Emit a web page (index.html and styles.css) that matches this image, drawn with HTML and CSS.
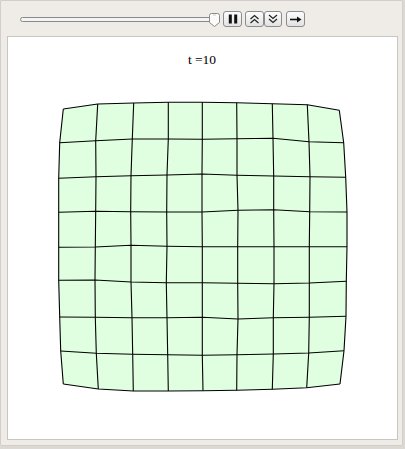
FILE: index.html
```html
<!DOCTYPE html>
<html>
<head>
<meta charset="utf-8">
<link rel="stylesheet" href="styles.css">
</head>
<body>
<div class="panel">
  <div class="controls">
    <svg class="slider" width="200" height="16" viewBox="0 0 200 16">
      <rect x="0.5" y="5.5" width="194" height="4" rx="2" fill="#f4f4f4" stroke="#8a8a8a"/>
      <path d="M189.5 3.5 Q189.5 1.5 191.5 1.5 L197.5 1.5 Q199.5 1.5 199.5 3.5 L199.5 10.5 L194.5 14.5 L189.5 10.5 Z" fill="#fbfbfb" stroke="#8a8a8a"/>
      <path d="M193 3 L196 3" stroke="#cfcfcf"/>
    </svg>
    <div class="btn btn-pause">
      <svg width="16" height="14" viewBox="0 0 16 14"><rect x="3.8" y="2.5" width="3" height="9" fill="#111"/><rect x="9.2" y="2.5" width="3" height="9" fill="#111"/></svg>
    </div>
    <div class="btn btn-up">
      <svg width="17" height="14" viewBox="0 0 17 14"><path d="M4.5 7 L8.5 3.5 L12.5 7 M4.5 11 L8.5 7.5 L12.5 11" fill="none" stroke="#222" stroke-width="1.2"/></svg>
    </div>
    <div class="btn btn-down">
      <svg width="16" height="14" viewBox="0 0 16 14"><path d="M4 3 L8 6.5 L12 3 M4 7 L8 10.5 L12 7" fill="none" stroke="#222" stroke-width="1.2"/></svg>
    </div>
    <div class="btn btn-arrow">
      <svg width="17" height="14" viewBox="0 0 17 14"><path d="M3 7.5 L11 7.5" stroke="#111" stroke-width="1.6"/><path d="M10 4.5 L14.5 7.5 L10 10.5 Z" fill="#111"/></svg>
    </div>
  </div>
  <div class="view">
    <svg class="plot" width="389" height="402" viewBox="8 37 389 402">
      <text x="202" y="63.5" class="title">t =10</text>
      <path class="fill" d="M63.3 109 L97.7 104 L133.7 103 L168.3 102.3 L202.3 102.3 L236.7 102.7 L272.3 103.7 L307.3 104.7 L339.3 110.3 L343.7 142.7 L345.7 177.3 L347 212 L347 246.7 L346.3 281.3 L346 316.3 L344 350.7 L340 384 L306.7 387.7 L272.3 389.3 L236.7 390.3 L203 390.7 L168.3 391 L133.3 391 L98.3 389 L63.3 384 L60.7 351 L59.7 317 L58.7 280.3 L58.7 247.3 L58.7 212.3 L58.7 178.3 L59.7 142.7 Z"/>
      <g class="lines">
        <polyline points="63.3,109 97.7,104 133.7,103 168.3,102.3 202.3,102.3 236.7,102.7 272.3,103.7 307.3,104.7 339.3,110.3"/>
        <polyline points="59.7,142.7 95.7,140.7 132.3,139 168.3,139 202.3,139.3 237,138.7 273,138.3 309,141.7 343.7,142.7"/>
        <polyline points="58.7,178.3 96,176.7 131,175.7 167,175 202,174 237,175.3 273.7,176 310,176.7 345.7,177.3"/>
        <polyline points="58.7,212.3 95.7,211.3 130.7,211.7 166.7,212 202,212 238,210.3 273.7,209.7 309.7,211.7 347,212"/>
        <polyline points="58.7,247.3 95.3,247 131,245.3 167,246.3 202.3,246.7 237.7,246.7 274,246.7 309.3,246.7 347,246.7"/>
        <polyline points="58.7,280.3 95,280 131,282 166.3,282.7 202.3,282.7 237.7,283.3 274,283.7 309.3,283 346.3,281.3"/>
        <polyline points="59.7,317 95.3,317.3 132,317.7 167,317.7 202.3,317.3 238,319 273.3,317.7 309.3,317.3 346,316.3"/>
        <polyline points="60.7,351 96.3,353.3 132.7,354.3 167.7,354.7 202.3,355.3 237,354.7 273.3,354 308.7,353 344,350.7"/>
        <polyline points="63.3,384 98.3,389 133.3,391 168.3,391 203,390.7 236.7,390.3 272.3,389.3 306.7,387.7 340,384"/>
        <polyline points="63.3,109 59.7,142.7 58.7,178.3 58.7,212.3 58.7,247.3 58.7,280.3 59.7,317 60.7,351 63.3,384"/>
        <polyline points="97.7,104 95.7,140.7 96,176.7 95.7,211.3 95.3,247 95,280 95.3,317.3 96.3,353.3 98.3,389"/>
        <polyline points="133.7,103 132.3,139 131,175.7 130.7,211.7 131,245.3 131,282 132,317.7 132.7,354.3 133.3,391"/>
        <polyline points="168.3,102.3 168.3,139 167,175 166.7,212 167,246.3 166.3,282.7 167,317.7 167.7,354.7 168.3,391"/>
        <polyline points="202.3,102.3 202.3,139.3 202,174 202,212 202.3,246.7 202.3,282.7 202.3,317.3 202.3,355.3 203,390.7"/>
        <polyline points="236.7,102.7 237,138.7 237,175.3 238,210.3 237.7,246.7 237.7,283.3 238,319 237,354.7 236.7,390.3"/>
        <polyline points="272.3,103.7 273,138.3 273.7,176 273.7,209.7 274,246.7 274,283.7 273.3,317.7 273.3,354 272.3,389.3"/>
        <polyline points="307.3,104.7 309,141.7 310,176.7 309.7,211.7 309.3,246.7 309.3,283 309.3,317.3 308.7,353 306.7,387.7"/>
        <polyline points="339.3,110.3 343.7,142.7 345.7,177.3 347,212 347,246.7 346.3,281.3 346,316.3 344,350.7 340,384"/>
      </g>
    </svg>
  </div>
</div>
</body>
</html>
```
FILE: styles.css
```css
html, body {
  margin: 0;
  padding: 0;
}
body {
  width: 405px;
  height: 449px;
  background: #dcd9d4;
  overflow: hidden;
}
.panel {
  box-sizing: border-box;
  width: 403px;
  height: 446px;
  background: #efece7;
  border: 1px solid #d2cfca;
  border-radius: 2px;
}
.controls {
  display: flex;
  align-items: flex-start;
  height: 35px;
  box-sizing: border-box;
  padding-top: 10px;
  padding-left: 19px;
}
.slider {
  display: block;
  margin-top: 1px;
  flex: none;
}
.btn {
  box-sizing: border-box;
  height: 16px;
  border: 1px solid #8c8c8c;
  border-radius: 3px;
  background: linear-gradient(#fdfdfd, #e2e2e2);
  display: flex;
  align-items: center;
  justify-content: center;
  flex: none;
}
.btn svg {
  display: block;
}
.btn-pause {
  width: 19px;
  margin-left: 3px;
}
.btn-up {
  width: 19px;
  margin-left: 3px;
}
.btn-down {
  width: 18px;
}
.btn-arrow {
  width: 19px;
  margin-left: 4px;
}
.view {
  box-sizing: border-box;
  width: 391px;
  height: 404px;
  margin-left: 6px;
  background: #ffffff;
  border: 1px solid #c9c6c1;
}
.plot {
  display: block;
}
.title {
  font-family: "Liberation Serif", "Times New Roman", serif;
  font-size: 13.5px;
  fill: #000;
  text-anchor: middle;
}
.fill {
  fill: #e0ffe0;
  stroke: none;
}
.lines polyline {
  fill: none;
  stroke: #000;
  stroke-width: 1.1;
  stroke-linejoin: round;
}
```
